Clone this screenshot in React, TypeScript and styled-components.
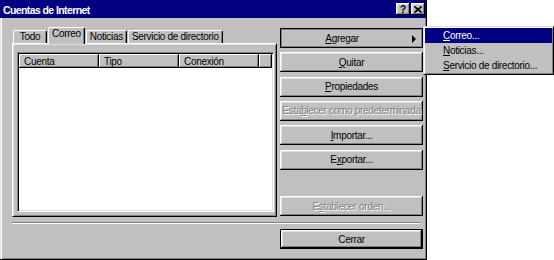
import React from 'react';
import styled, { createGlobalStyle, css } from 'styled-components';

const face = '#c0c0c0';
const light = '#dfdfdf';
const shadow = '#808080';
const navy = '#000080';

const raised = css`
  box-shadow: inset -1px -1px #000, inset 1px 1px #fff, inset -2px -2px ${shadow},
    inset 2px 2px ${light};
`;

const GlobalStyle = createGlobalStyle`
  html, body {
    margin: 0;
    padding: 0;
    background: #fff;
  }
  body {
    font-family: 'Liberation Sans', Arial, sans-serif;
    font-size: 10px;
    letter-spacing: -0.3px;
    color: #000;
  }
`;

/* =========================
   WINDOW FRAME
========================= */
const Screen = styled.div`
  position: relative;
  width: 554px;
  height: 260px;
  overflow: hidden;
  background: #fff;
`;

const Window = styled.div`
  box-sizing: border-box;
  width: 427px;
  height: 260px;
  display: flex;
  flex-direction: column;
  background: ${face};
  border-right: 1px solid #000;
  border-bottom: 1px solid #000;
  box-shadow: inset -1px -1px ${shadow};
`;

const TitleBar = styled.div`
  height: 18px;
  display: flex;
  align-items: center;
  padding: 0 1px 0 3px;
  background: ${navy};
  color: #fff;
`;

const TitleText = styled.span`
  flex: 1;
  padding-top: 1px;
  font-size: 10.5px;
  font-weight: bold;
  letter-spacing: -0.6px;
`;

const TitleButtons = styled.div`
  display: flex;
  gap: 1px;
`;

const TitleButton = styled.div`
  box-sizing: border-box;
  width: 14px;
  height: 12px;
  display: flex;
  align-items: center;
  justify-content: center;
  background: ${face};
  color: #000;
  font-size: 10px;
  font-weight: bold;
  letter-spacing: 0;
  ${raised}
`;

const Body = styled.div`
  flex: 1;
  display: grid;
  grid-template-columns: 265px 143px;
  grid-template-rows: auto auto auto;
  column-gap: 3px;
  align-content: start;
  padding: 9px 3px 0 11px;
  border-left: 1px solid ${light};
  box-shadow: inset 1px 0 #fff;
`;

/* =========================
   TABS
========================= */
const TabControl = styled.div`
  height: 190px;
  display: flex;
  flex-direction: column;
`;

const TabStrip = styled.div`
  position: relative;
  z-index: 1;
  height: 17px;
  margin-bottom: -1px;
  padding-left: 1px;
  display: flex;
  align-items: flex-end;
  gap: 1px;
`;

const Tab = styled.div<{ $active?: boolean }>`
  box-sizing: border-box;
  min-width: 34px;
  height: ${({ $active }) => ($active ? 17 : 13)}px;
  margin-bottom: ${({ $active }) => ($active ? 0 : 1)}px;
  padding: 0 3px;
  border-top: 1px solid #fff;
  border-left: 1px solid #fff;
  border-right: 1px solid #000;
  border-radius: 2px 2px 0 0;
  box-shadow: inset -1px 0 ${shadow};
  background: ${face};
  line-height: 12px;
  white-space: nowrap;
  text-align: center;
`;

const TabPanel = styled.div`
  flex: 1;
  padding: 8px 0 0 4px;
  background: ${face};
  border: 1px solid;
  border-color: #fff #000 #000 #fff;
  box-shadow: inset 1px 1px ${light}, inset -1px -1px ${shadow};
`;

/* =========================
   LIST VIEW
========================= */
const ListView = styled.div`
  box-sizing: border-box;
  width: 257px;
  height: 160px;
  padding: 1px;
  background: #fff;
  border: 1px solid;
  border-color: ${shadow} #fff #fff ${shadow};
  box-shadow: inset 1px 1px #000, inset -1px -1px ${light};
`;

const HeaderRow = styled.div`
  display: flex;
  height: 14px;
`;

const HeaderCell = styled.div<{ $width?: number }>`
  box-sizing: border-box;
  ${({ $width }) => ($width ? `width: ${$width}px;` : 'flex: 1;')}
  height: 14px;
  padding: 1px 0 0 5px;
  background: ${face};
  line-height: 13px;
  white-space: nowrap;
  box-shadow: inset -1px -1px #000, inset 1px 1px #fff, inset -2px -2px ${shadow};
`;

/* =========================
   BUTTONS
========================= */
const ButtonColumn = styled.div`
  display: flex;
  flex-direction: column;
  gap: 4.33px;
  padding: 1px 0;
`;

const Button = styled.button<{ $default?: boolean; $pressed?: boolean; $pushDown?: boolean }>`
  box-sizing: border-box;
  width: 143px;
  height: 20px;
  padding: 0;
  display: flex;
  align-items: center;
  justify-content: center;
  background: ${face};
  border: ${({ $default }) => ($default ? '1px solid #000' : 'none')};
  font: inherit;
  letter-spacing: inherit;
  white-space: nowrap;
  color: #000;
  ${raised}
  ${({ $pushDown }) => $pushDown && 'margin-top: auto;'}
  ${({ $pressed }) =>
    $pressed &&
    css`
      padding: 1px 7px 0 3px;
      box-shadow: inset 0 0 0 1px #000, inset 0 0 0 2px ${shadow};
    `}

  &:disabled {
    color: ${shadow};
    text-shadow: 1px 1px 0 #fff;
  }
`;

const ButtonLabel = styled.span`
  flex: 1;
  text-align: center;
`;

const SubmenuArrow = styled.span`
  width: 0;
  height: 0;
  margin-left: 11px;
  border-left: 4px solid #000;
  border-top: 4px solid transparent;
  border-bottom: 4px solid transparent;
`;

const Key = styled.span`
  text-decoration: underline;
`;

const Separator = styled.div`
  grid-column: 1 / -1;
  height: 0;
  margin: 5px 3px 0 0;
  border-top: 1px solid ${shadow};
  border-bottom: 1px solid #fff;
`;

const CloseRow = styled.div`
  grid-column: 2;
  margin-top: 5px;
`;

/* =========================
   POPUP MENU
========================= */
const Menu = styled.div`
  position: absolute;
  left: 423px;
  top: 26px;
  width: 131px;
  box-sizing: border-box;
  padding: 1px;
  background: ${face};
  border: 1px solid;
  border-color: ${light} #000 #000 ${light};
  box-shadow: inset 1px 1px #fff, inset -1px -1px ${shadow};
`;

const MenuItem = styled.div<{ $highlighted?: boolean }>`
  height: 15px;
  line-height: 15px;
  padding-left: 18px;
  white-space: nowrap;
  background: ${({ $highlighted }) => ($highlighted ? navy : 'transparent')};
  color: ${({ $highlighted }) => ($highlighted ? '#fff' : '#000')};
`;

const CloseGlyph = () => (
  <svg width="8" height="7" viewBox="0 0 8 7">
    <path d="M0.5 0.5 L7.5 6.5 M7.5 0.5 L0.5 6.5" stroke="#000" strokeWidth="1.7" fill="none" />
  </svg>
);

const tabs = ['Todo', 'Correo', 'Noticias', 'Servicio de directorio'];
const columns = [
  { label: 'Cuenta', width: 80 },
  { label: 'Tipo', width: 80 },
  { label: 'Conexión', width: 80 },
];

export default function App() {
  return (
    <Screen>
      <GlobalStyle />
      <Window>
        <TitleBar>
          <TitleText>Cuentas de Internet</TitleText>
          <TitleButtons>
            <TitleButton>?</TitleButton>
            <TitleButton>
              <CloseGlyph />
            </TitleButton>
          </TitleButtons>
        </TitleBar>

        <Body>
          <TabControl>
            <TabStrip>
              {tabs.map((t) => (
                <Tab key={t} $active={t === 'Correo'}>
                  {t}
                </Tab>
              ))}
            </TabStrip>
            <TabPanel>
              <ListView>
                <HeaderRow>
                  {columns.map((c) => (
                    <HeaderCell key={c.label} $width={c.width}>
                      {c.label}
                    </HeaderCell>
                  ))}
                  <HeaderCell />
                </HeaderRow>
              </ListView>
            </TabPanel>
          </TabControl>

          <ButtonColumn>
            <Button $pressed>
              <ButtonLabel>
                <Key>A</Key>gregar
              </ButtonLabel>
              <SubmenuArrow />
            </Button>
            <Button>
              <Key>Q</Key>uitar
            </Button>
            <Button>
              <Key>P</Key>ropiedades
            </Button>
            <Button disabled>
              Esta<Key>b</Key>lecer como predeterminada
            </Button>
            <Button>
              <Key>I</Key>mportar...
            </Button>
            <Button>
              E<Key>x</Key>portar...
            </Button>
            <Button disabled $pushDown>
              E<Key>s</Key>tablecer orden...
            </Button>
          </ButtonColumn>

          <Separator />

          <CloseRow>
            <Button $default>Cerrar</Button>
          </CloseRow>
        </Body>
      </Window>

      <Menu>
        <MenuItem $highlighted>
          <Key>C</Key>orreo...
        </MenuItem>
        <MenuItem>
          <Key>N</Key>oticias...
        </MenuItem>
        <MenuItem>
          <Key>S</Key>ervicio de directorio...
        </MenuItem>
      </Menu>
    </Screen>
  );
}
